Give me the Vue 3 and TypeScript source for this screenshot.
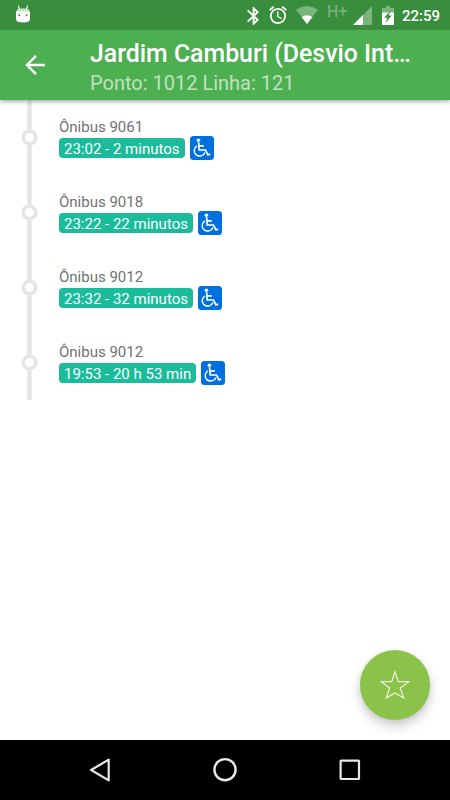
<script setup lang="ts">
interface Arrival {
  bus: string
  time: string
}

const arrivals: Arrival[] = [
  { bus: 'Ônibus 9061', time: '23:02 - 2 minutos' },
  { bus: 'Ônibus 9018', time: '23:22 - 22 minutos' },
  { bus: 'Ônibus 9012', time: '23:32 - 32 minutos' },
  { bus: 'Ônibus 9012', time: '19:53 - 20 h 53 min' },
]
</script>

<template>
  <div class="screen">
    <div class="status">
      <svg class="droid" width="16" height="19" viewBox="0 0 16 19">
        <path d="M3.5 1l1 3M12.5 1l-1 3" stroke="#fff" stroke-width="1.1" stroke-linecap="round" />
        <path d="M1.5 7Q1.5 3.5 5 3.5h6q3.5 0 3.5 3.5z" fill="#c8e6c9" />
        <path d="M1 6.5h14v7.5q0 3.5-7 3.5t-7-3.5z" fill="#fff" />
        <circle cx="4.2" cy="10.2" r="1" fill="#388e3c" />
        <circle cx="11.6" cy="10.2" r="1" fill="#388e3c" />
      </svg>
      <svg class="bluetooth" width="12" height="18" viewBox="5 2 12.71 20" preserveAspectRatio="none">
        <path fill="#fff" d="M17.71 7.71L12 2h-1v7.59L6.41 5 5 6.41 10.59 12 5 17.59 6.41 19 11 14.41V22h1l5.71-5.71-4.3-4.29 4.3-4.29zM13 5.83l1.88 1.88L13 9.59V5.83zm1.88 10.46L13 18.17v-3.76l1.88 1.88z" />
      </svg>
      <svg class="alarm" width="18" height="18" viewBox="2 1.86 20 20.2">
        <path fill="#fff" d="M22 5.72l-4.6-3.86-1.29 1.53 4.6 3.86L22 5.72zM7.88 3.39L6.6 1.86 2 5.71l1.29 1.53 4.59-3.85zM12.5 8H11v6l4.75 2.85.75-1.23-4-2.37V8zM12 4c-4.97 0-9 4.03-9 9s4.02 9 9 9a9 9 0 0 0 0-18zm0 16c-3.87 0-7-3.13-7-7s3.13-7 7-7 7 3.13 7 7-3.13 7-7 7z" />
      </svg>
      <svg class="wifi" width="22" height="18" viewBox="0 0 22 18">
        <path fill="#7ab57d" d="M0 3.6Q11-3.6 22 3.6L11 18z" />
        <path fill="#fff" d="M5.6 11Q11 7.6 16.4 11L11 18z" />
      </svg>
      <span class="network">H+</span>
      <svg class="signal" width="19" height="19" viewBox="0 0 19 19">
        <path fill="#7ab57d" d="M19 0v19H0z" />
        <path fill="#fff" d="M10 9v10H0z" />
      </svg>
      <svg class="battery" width="12" height="19" viewBox="0 0 12 19">
        <path fill="#7ab57d" d="M4 0h4v2h4v6H0V2h4z" />
        <path fill="#fff" d="M0 6.5h12V18q0 1-1 1H1q-1 0-1-1z" />
        <path fill="#388e3c" d="M8.5 4.5L2.2 11.8h3.2L3.8 16.8l6-7.2H6.6z" />
      </svg>
      <span class="clock">22:59</span>
    </div>

    <header class="toolbar">
      <svg class="back" width="20" height="20" viewBox="0 0 20 20">
        <path d="M20 10H2M11 .9L1.9 10l9.1 9.1" fill="none" stroke="#fff" stroke-width="2.4" />
      </svg>
      <div class="titles">
        <h1>Jardim Camburi (Desvio Int…</h1>
        <p>Ponto: 1012 Linha: 121</p>
      </div>
    </header>

    <main class="content">
      <div v-for="(item, i) in arrivals" :key="i" class="row">
        <svg class="rail" width="19" height="75" viewBox="0 0 19 75">
          <path d="M9.5 0V75" stroke="#e6e4e5" stroke-width="4.4" />
          <circle cx="9.5" cy="37.5" r="6.3" fill="#fff" stroke="#e6e4e5" stroke-width="3.6" />
        </svg>
        <div class="info">
          <div class="bus">{{ item.bus }}</div>
          <div class="line">
            <span class="badge">{{ item.time }}</span>
            <svg width="24" height="24" viewBox="0 0 24 24">
              <rect width="24" height="24" rx="3.5" fill="#0070df" />
              <circle cx="8.4" cy="4.2" r="1.8" fill="#fff" />
              <path d="M8.6 6.2l.6 7.8h6.3l2.5 5 2.2-1M9 9.9h4.8" fill="none" stroke="#fff" stroke-width="1.7" />
              <path d="M7 9.8a5.5 5.5 0 1 0 7.9 6.6" fill="none" stroke="#fff" stroke-width="1.5" />
            </svg>
          </div>
        </div>
      </div>
    </main>

    <button class="fab" aria-label="Favorito">
      <svg width="30" height="30" viewBox="0 0 30 30">
        <path d="M15 1.9l3.3 9.7 10.5.1-8.5 6.3 3.4 10-8.7-5-8.7 5 3.4-10-8.5-6.3 10.5-.1z" fill="none" stroke="#eaf5dc" stroke-width="1.2" />
      </svg>
    </button>

    <nav class="nav">
      <svg width="24" height="26" viewBox="0 0 24 26">
        <path d="M20.7 2.6v20.8L3.1 13z" fill="none" stroke="#e8e8e8" stroke-width="2.2" stroke-linejoin="round" />
      </svg>
      <svg width="26" height="26" viewBox="0 0 26 26">
        <circle cx="13" cy="12.7" r="10.6" fill="none" stroke="#e8e8e8" stroke-width="2.4" />
      </svg>
      <svg width="24" height="24" viewBox="0 0 24 24">
        <rect x="2.6" y="2.6" width="18.4" height="18.4" rx=".6" fill="none" stroke="#e8e8e8" stroke-width="2.2" />
      </svg>
    </nav>
  </div>
</template>

<style>
body {
  margin: 0;
}
</style>

<style scoped>
.screen {
  position: relative;
  display: flex;
  flex-direction: column;
  width: 450px;
  height: 800px;
  overflow: hidden;
  background: #fff;
  font-family: Roboto, sans-serif;
}
svg {
  display: block;
  flex: none;
}
.status {
  position: relative;
  z-index: 2;
  display: flex;
  align-items: flex-start;
  box-sizing: border-box;
  height: 30px;
  padding: 6px 10px 0 15px;
  background: #388e3c;
  white-space: nowrap;
}
.droid {
  margin-top: -1px;
}
.bluetooth {
  margin: 1px 10px 0 auto;
}
.wifi {
  margin-left: 9px;
}
.network {
  width: 22px;
  margin: -3px 0 0 9px;
  color: #74b077;
  font-size: 16px;
  font-weight: 500;
  line-height: 18px;
}
.signal {
  margin-left: 4px;
}
.battery {
  margin-left: 10px;
}
.clock {
  width: 38px;
  margin-left: 8px;
  color: #fff;
  font-size: 15px;
  font-weight: 500;
  line-height: 20px;
}
.toolbar {
  position: relative;
  z-index: 1;
  display: flex;
  box-sizing: border-box;
  height: 70px;
  padding-left: 25px;
  background: #4caf50;
  box-shadow: 0 1px 5px rgba(0, 0, 0, 0.4);
}
.back {
  margin-top: 25px;
}
.titles {
  margin-left: 45px;
  white-space: nowrap;
}
h1 {
  margin: 9px 0 0;
  color: #fff;
  font-size: 24.85px;
  font-weight: 500;
  line-height: 30px;
}
p {
  margin: 2px 0 0;
  color: #c0e2c1;
  font-size: 20px;
  line-height: 24px;
}
.content {
  flex: 1;
}
.row {
  display: flex;
  height: 75px;
  padding-left: 20px;
}
.info {
  padding: 17px 0 0 20px;
}
.bus {
  color: #727272;
  font-size: 15px;
  height: 19px;
  line-height: 21px;
}
.line {
  display: flex;
  align-items: center;
  gap: 5px;
  height: 24px;
}
.badge {
  box-sizing: border-box;
  height: 20px;
  padding: 0 5px;
  border-radius: 4px;
  background: #1abc9c;
  color: #fff;
  font-size: 15px;
  line-height: 22px;
  white-space: nowrap;
}
.fab {
  position: absolute;
  right: 20px;
  bottom: 80px;
  display: grid;
  place-items: center;
  width: 70px;
  height: 70px;
  padding: 0;
  border: 0;
  border-radius: 50%;
  background: #8bc34a;
  box-shadow: 0 6px 12px rgba(0, 0, 0, 0.2), 0 1px 4px rgba(0, 0, 0, 0.08);
}
.nav {
  position: relative;
  display: flex;
  align-items: center;
  justify-content: space-between;
  box-sizing: border-box;
  height: 60px;
  padding: 0 88px;
  background: #000;
}
</style>
